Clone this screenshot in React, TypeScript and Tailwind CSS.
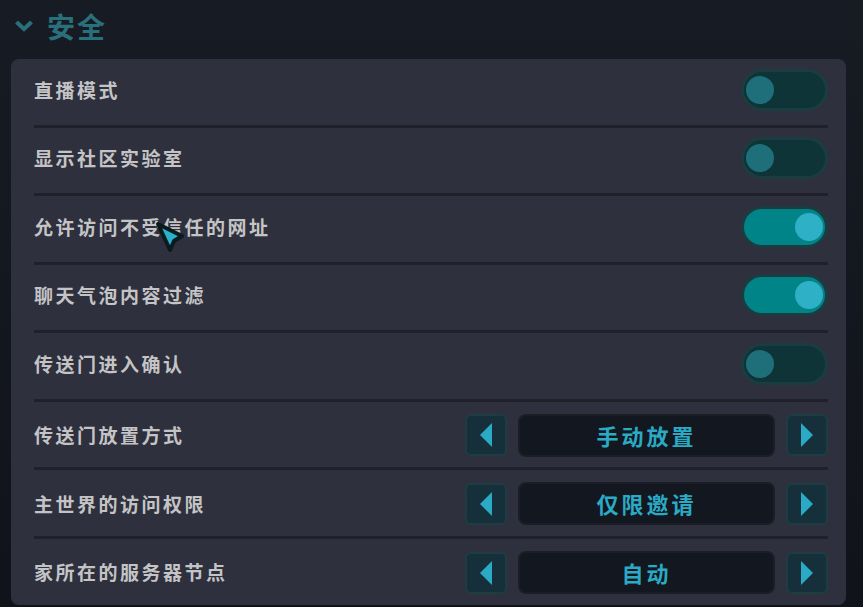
const font = { fontFamily: '"Noto Sans CJK SC", "Noto Sans", sans-serif' };

type Row =
  | { label: string; kind: "toggle"; on: boolean }
  | { label: string; kind: "select"; value: string };

const rows: Row[] = [
  { label: "直播模式", kind: "toggle", on: false },
  { label: "显示社区实验室", kind: "toggle", on: false },
  { label: "允许访问不受信任的网址", kind: "toggle", on: true },
  { label: "聊天气泡内容过滤", kind: "toggle", on: true },
  { label: "传送门进入确认", kind: "toggle", on: false },
  { label: "传送门放置方式", kind: "select", value: "手动放置" },
  { label: "主世界的访问权限", kind: "select", value: "仅限邀请" },
  { label: "家所在的服务器节点", kind: "select", value: "自动" },
];

function Toggle({ on }: { on: boolean }) {
  return (
    <div
      className={`flex h-[42px] w-[87px] items-center rounded-full border-[3px] border-[#1b3d41] px-[2px] ${
        on ? "justify-end bg-[#008487]" : "justify-start bg-[#0e3437]"
      }`}
    >
      <div
        className={`h-[28px] w-[28px] rounded-full ${
          on ? "bg-[#2eb0c7]" : "bg-[#1f6f7b]"
        }`}
      />
    </div>
  );
}

function ArrowButton({ dir }: { dir: "left" | "right" }) {
  return (
    <div className="flex h-[42px] w-[42px] items-center justify-center rounded-md border-2 border-[#1d3d43] bg-[#15303a]">
      <svg width="14" height="26" viewBox="0 0 14 26">
        {dir === "left" ? (
          <polygon points="13,1 13,25 1,13" fill="#2aaac4" />
        ) : (
          <polygon points="1,1 1,25 13,13" fill="#2aaac4" />
        )}
      </svg>
    </div>
  );
}

function Selector({ value }: { value: string }) {
  return (
    <div className="flex items-center gap-[11px]">
      <ArrowButton dir="left" />
      <div className="flex h-[43px] w-[257px] items-center justify-center rounded-lg border-2 border-[#1b1e27] bg-[#121720]">
        <span className="text-[22px] font-bold tracking-[3px] text-[#2aaac4]">{value}</span>
      </div>
      <ArrowButton dir="right" />
    </div>
  );
}

export default function App() {
  return (
    <div
      className="relative h-[607px] w-[863px] overflow-hidden bg-gradient-to-b from-[#171b23] to-[#10131a]"
      style={font}
    >
      {/* Section header */}
      <div className="flex h-[59px] items-center gap-[13px] pb-[8px] pl-[14px]">
        <svg width="20" height="14" viewBox="0 0 20 14">
          <path d="M2.5 3 L10 10 L17.5 3" stroke="#2a6f7c" strokeWidth="4" fill="none" />
        </svg>
        <span className="text-[28px] font-bold tracking-[2px] text-[#2a6f7c]">安全</span>
      </div>

      {/* Panel */}
      <div className="ml-[11px] w-[835px] rounded-lg bg-[#2e303d] pl-[23px] pr-[18px]">
        {rows.map((row, i) => {
          const last = i === rows.length - 1;
          const pad = row.kind === "toggle" ? "pb-[4px]" : "pt-[2px]";
          return (
            <div key={row.label}>
              <div className={`flex items-center justify-between ${last ? "h-[66px]" : "h-[65.5px]"} ${pad}`}>
                <span className="text-[19px] font-bold tracking-[2.5px] text-[#c4c4c6]">{row.label}</span>
                {row.kind === "toggle" ? <Toggle on={row.on} /> : <Selector value={row.value} />}
              </div>
              {!last && <div className="h-[3px] bg-[#1f2029]" />}
            </div>
          );
        })}
      </div>

      {/* Mouse cursor */}
      <svg className="absolute left-[150px] top-[215px]" width="40" height="40" viewBox="0 0 40 40">
        <polygon
          points="8,9 32,21 24,26 20,35"
          fill="#2ab0c8"
          stroke="#0b1a1f"
          strokeWidth="4"
          strokeLinejoin="round"
        />
      </svg>
    </div>
  );
}
